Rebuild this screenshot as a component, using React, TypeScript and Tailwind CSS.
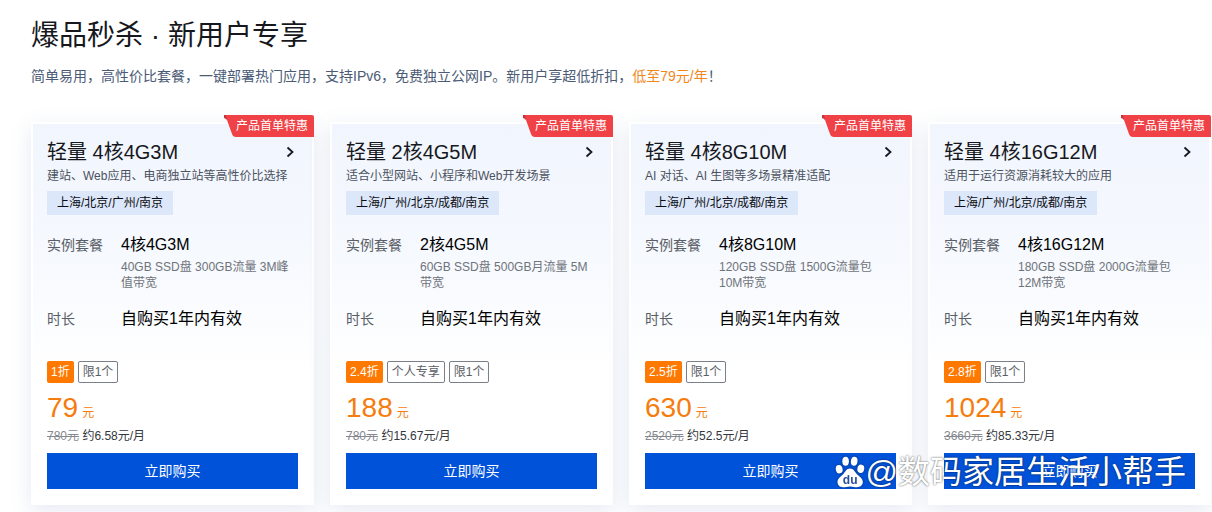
type Plan = {
  title: string;
  desc: string;
  regions: string;
  spec: string;
  detail: string;
  discount: string;
  limits: string[];
  price: string;
  original: string;
  monthly: string;
};

const PLANS: Plan[] = [
  {
    title: "轻量 4核4G3M",
    desc: "建站、Web应用、电商独立站等高性价比选择",
    regions: "上海/北京/广州/南京",
    spec: "4核4G3M",
    detail: "40GB SSD盘 300GB流量 3M峰值带宽",
    discount: "1折",
    limits: ["限1个"],
    price: "79",
    original: "780元",
    monthly: "约6.58元/月",
  },
  {
    title: "轻量 2核4G5M",
    desc: "适合小型网站、小程序和Web开发场景",
    regions: "上海/广州/北京/成都/南京",
    spec: "2核4G5M",
    detail: "60GB SSD盘 500GB月流量 5M带宽",
    discount: "2.4折",
    limits: ["个人专享", "限1个"],
    price: "188",
    original: "780元",
    monthly: "约15.67元/月",
  },
  {
    title: "轻量 4核8G10M",
    desc: "AI 对话、AI 生图等多场景精准适配",
    regions: "上海/广州/北京/成都/南京",
    spec: "4核8G10M",
    detail: "120GB SSD盘 1500G流量包 10M带宽",
    discount: "2.5折",
    limits: ["限1个"],
    price: "630",
    original: "2520元",
    monthly: "约52.5元/月",
  },
  {
    title: "轻量 4核16G12M",
    desc: "适用于运行资源消耗较大的应用",
    regions: "上海/广州/北京/成都/南京",
    spec: "4核16G12M",
    detail: "180GB SSD盘 2000G流量包 12M带宽",
    discount: "2.8折",
    limits: ["限1个"],
    price: "1024",
    original: "3660元",
    monthly: "约85.33元/月",
  },
];

function Ribbon() {
  return (
    <div className="absolute -top-[9px] -right-[2px] h-[22px] w-[90px]">
      <svg viewBox="0 0 90 22" className="absolute inset-0 h-full w-full" aria-hidden="true">
        <path d="M0 0H88Q90 0 90 2V22H12Q9 22 8 19L3 5Q2 3 0 3Z" fill="#ef4146" />
        <path d="M0 0H2L3 5Q2 3 0 3Z" fill="#c9333a" />
      </svg>
      <span className="relative block pr-[6px] text-right text-xs leading-[22px] whitespace-nowrap text-white">
        产品首单特惠
      </span>
    </div>
  );
}

function PlanCard({ plan }: { plan: Plan }) {
  return (
    <article className="relative border-2 border-white bg-linear-to-b from-[#f1f5fd] via-[#f6f9fe] via-35% to-white to-65% p-[14px] shadow-[0_6px_20px_rgba(80,115,170,0.15)]">
      <Ribbon />

      <div className="flex items-center justify-between">
        <h2 className="text-xl leading-7 text-[#16181d]">{plan.title}</h2>
        <a href="#detail" aria-label={plan.title} className="p-[3px]">
          <svg viewBox="0 0 10 12" className="h-3 w-[10px]" aria-hidden="true">
            <path d="M2.5 1.5L7.5 6L2.5 10.5" fill="none" stroke="#16181d" strokeWidth="1.8" />
          </svg>
        </a>
      </div>
      <p className="text-xs leading-5 text-[#4b5260]">{plan.desc}</p>
      <div className="mt-[5px] flex">
        <span className="bg-[#dde7fa] px-[10px] text-xs leading-6 text-[#0b0d12]">{plan.regions}</span>
      </div>

      <dl className="mt-[17px] grid grid-cols-[74px_1fr] gap-y-4">
        <dt className="text-sm leading-[26px] text-[#5a5e66]">实例套餐</dt>
        <dd>
          <div className="text-base leading-[26px] text-black">{plan.spec}</div>
          <div className="mt-px text-xs leading-4 text-[#6f737a]">{plan.detail}</div>
        </dd>
        <dt className="text-sm leading-6 text-[#5a5e66]">时长</dt>
        <dd className="text-base leading-6 text-black">自购买1年内有效</dd>
      </dl>

      <div className="mt-[30px] flex gap-1 text-xs">
        <span className="rounded-xs bg-[#ff7800] px-1 leading-[22px] text-white">{plan.discount}</span>
        {plan.limits.map((limit) => (
          <span key={limit} className="rounded-xs border border-[#7b7f87] px-1 leading-5 text-[#5a5e66]">
            {limit}
          </span>
        ))}
      </div>

      <div className="mt-[9px] flex items-baseline gap-1 text-[#f57c0d]">
        <span className="text-[28px] leading-8">{plan.price}</span>
        <span className="text-xs">元</span>
      </div>
      <p className="mt-[3px] text-xs leading-[18px] text-[#33363c]">
        <del className="text-[#85898f]">{plan.original}</del> {plan.monthly}
      </p>
      <button type="button" className="mt-2 h-9 w-full bg-[#0052d9] text-sm text-white">
        立即购买
      </button>
    </article>
  );
}

function Watermark() {
  return (
    <div className="pointer-events-none absolute right-6 bottom-5 flex items-center gap-px text-white">
      <svg
        viewBox="0 0 30 32"
        className="h-8 w-[30px] drop-shadow-[0_0_1px_rgba(0,0,0,0.5)]"
        fill="#fff"
        aria-hidden="true"
      >
        <ellipse cx="4.2" cy="13.2" rx="3.4" ry="4.2" transform="rotate(-12 4.2 13.2)" />
        <ellipse cx="10.6" cy="5.2" rx="3.3" ry="4.5" />
        <ellipse cx="19.2" cy="5.2" rx="3.3" ry="4.5" transform="rotate(8 19.2 5.2)" />
        <ellipse cx="25.8" cy="12.8" rx="3.4" ry="4.2" transform="rotate(12 25.8 12.8)" />
        <path d="M15 12.5C11.5 12.5 10.5 15.5 8.3 18C6 20.5 2.5 22.3 2.5 26C2.5 29.3 4.8 31.2 8 31.2C10.5 31.2 12.4 30.4 15 30.4S19.5 31.2 22 31.2C25.2 31.2 27.8 29.3 27.8 26C27.8 22.3 24.2 20.5 21.8 18C19.6 15.5 18.5 12.5 15 12.5Z" />
        <text x="15.2" y="28" textAnchor="middle" fontSize="12" fontWeight="700" fill="#2b4f9e">
          du
        </text>
      </svg>
      <span className="pr-0.5 text-[32px] leading-10 [text-shadow:0_0_2px_rgba(0,0,0,0.7)]">
        @数码家居生活小帮手
      </span>
    </div>
  );
}

export default function App() {
  return (
    <main className="relative overflow-hidden bg-white pt-4 pr-px pb-[7px] pl-[31px] font-['Liberation_Sans','Noto_Sans_CJK_SC',sans-serif]">
      <h1 className="text-[28px] leading-10 text-[#16181d]">爆品秒杀 · 新用户专享</h1>
      <p className="mt-[10px] text-sm leading-5 text-[#4b5b76]">
        简单易用，高性价比套餐，一键部署热门应用，支持IPv6，免费独立公网IP。新用户享超低折扣，
        <span className="text-[#f0861c]">低至79元/年</span>！
      </p>

      <section className="mt-9 grid grid-cols-4 gap-4">
        {PLANS.map((plan) => (
          <PlanCard key={plan.title} plan={plan} />
        ))}
      </section>

      <Watermark />
    </main>
  );
}
